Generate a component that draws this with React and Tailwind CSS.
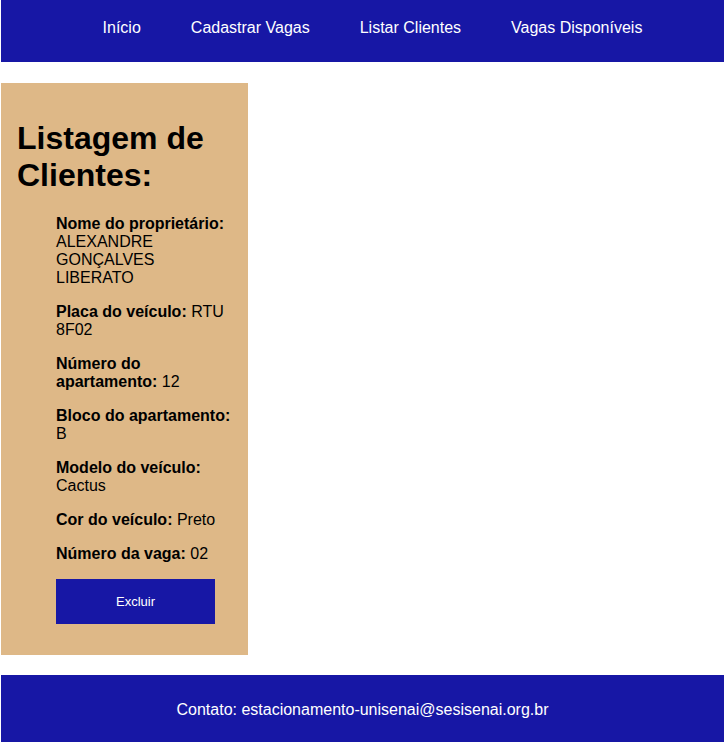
const BLUE = 'bg-[#1717a5]'

const clientes = [
  {
    nome: 'ALEXANDRE GONÇALVES LIBERATO',
    placa: 'RTU 8F02',
    apartamento: '12',
    bloco: 'B',
    modelo: 'Cactus',
    cor: 'Preto',
    vaga: '02',
  },
]

function Campo({ label, value }) {
  return (
    <li className="mb-4">
      <strong className="font-bold">{label}:</strong> {value}
    </li>
  )
}

export default function App() {
  const links = ['Início', 'Cadastrar Vagas', 'Listar Clientes', 'Vagas Disponíveis']

  return (
    <div
      className="min-h-screen bg-white pl-[1px] pr-[2px] text-[16px] leading-[18px] text-black"
      style={{ fontFamily: '"Liberation Sans", Arial, sans-serif' }}
    >
      <header className={`${BLUE} h-[62px] pt-[19px]`}>
        <nav className="flex justify-center gap-[50px] pl-[20px] text-white">
          {links.map(l => (
            <a key={l} href="#" className="leading-[18px]">{l}</a>
          ))}
        </nav>
      </header>

      <main className="mt-[21px] flex">
        <section className="w-[247px] bg-[#deb887] px-4 pt-4 pb-[15px]">
          <h1 className="my-[21px] text-[32px] leading-[37px] font-bold">
            Listagem de Clientes:
          </h1>
          {clientes.map(c => (
            <ul key={c.placa} className="my-4 pl-[39px]">
              <Campo label="Nome do proprietário" value={c.nome} />
              <Campo label="Placa do veículo" value={c.placa} />
              <Campo label="Número do apartamento" value={c.apartamento} />
              <Campo label="Bloco do apartamento" value={c.bloco} />
              <Campo label="Modelo do veículo" value={c.modelo} />
              <Campo label="Cor do veículo" value={c.cor} />
              <Campo label="Número da vaga" value={c.vaga} />
              <li>
                <button className={`${BLUE} h-[45px] w-[159px] text-[13px] text-white`}>
                  Excluir
                </button>
              </li>
            </ul>
          ))}
        </section>
      </main>

      <footer className={`${BLUE} mt-5 flex h-[67px] items-center justify-center pt-[2px] text-white`}>
        <p>Contato: estacionamento-unisenai@sesisenai.org.br</p>
      </footer>
    </div>
  )
}
